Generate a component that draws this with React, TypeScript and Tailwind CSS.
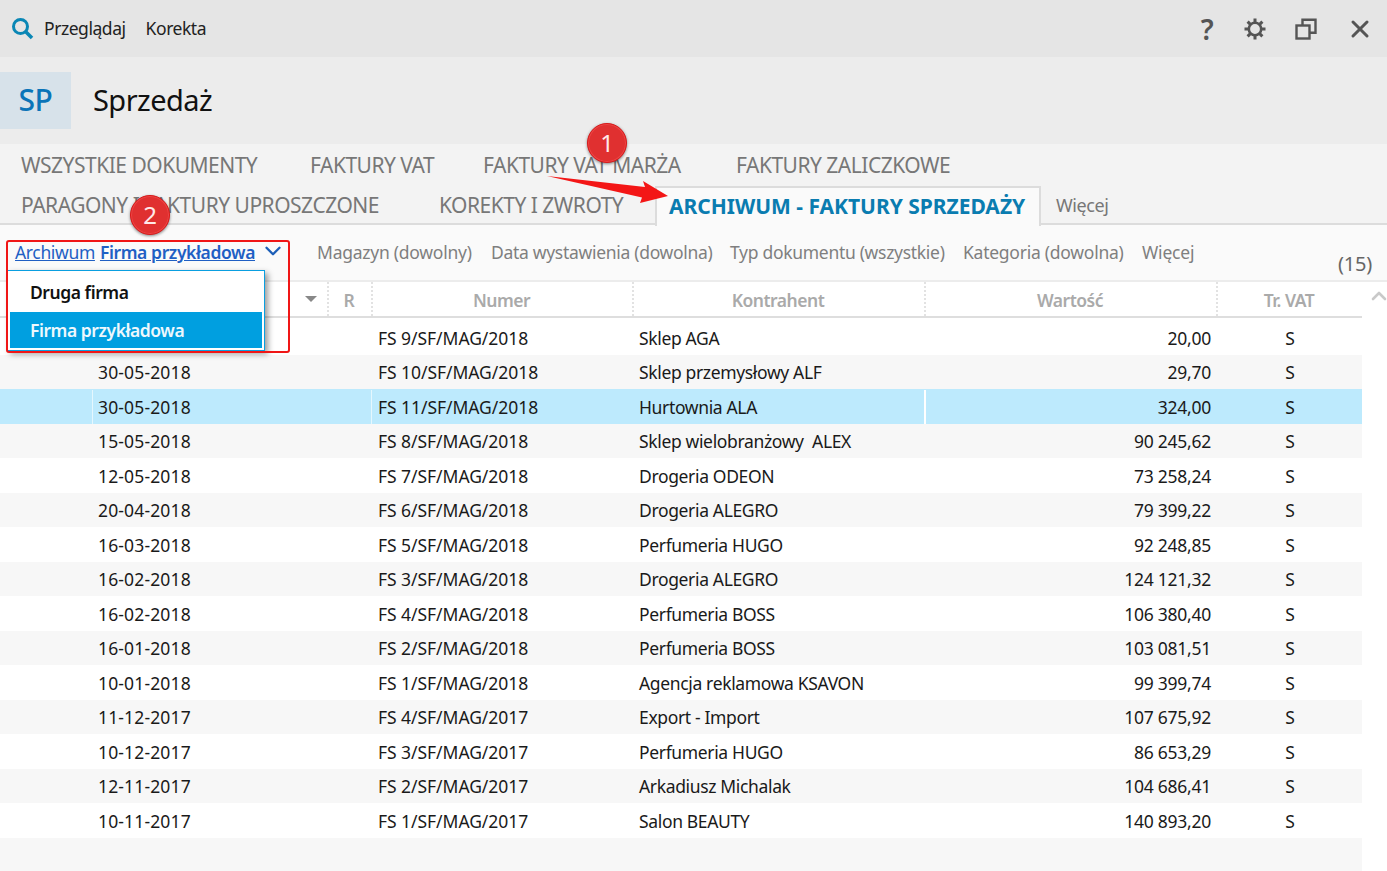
import { ChevronDown, ChevronUp, X } from 'lucide-react'

const rows = [
  ['30-05-2018', 'FS 9/SF/MAG/2018', 'Sklep AGA', '20,00'],
  ['30-05-2018', 'FS 10/SF/MAG/2018', 'Sklep przemysłowy ALF', '29,70'],
  ['30-05-2018', 'FS 11/SF/MAG/2018', 'Hurtownia ALA', '324,00'],
  ['15-05-2018', 'FS 8/SF/MAG/2018', 'Sklep wielobranżowy  ALEX', '90 245,62'],
  ['12-05-2018', 'FS 7/SF/MAG/2018', 'Drogeria ODEON', '73 258,24'],
  ['20-04-2018', 'FS 6/SF/MAG/2018', 'Drogeria ALEGRO', '79 399,22'],
  ['16-03-2018', 'FS 5/SF/MAG/2018', 'Perfumeria HUGO', '92 248,85'],
  ['16-02-2018', 'FS 3/SF/MAG/2018', 'Drogeria ALEGRO', '124 121,32'],
  ['16-02-2018', 'FS 4/SF/MAG/2018', 'Perfumeria BOSS', '106 380,40'],
  ['16-01-2018', 'FS 2/SF/MAG/2018', 'Perfumeria BOSS', '103 081,51'],
  ['10-01-2018', 'FS 1/SF/MAG/2018', 'Agencja reklamowa KSAVON', '99 399,74'],
  ['11-12-2017', 'FS 4/SF/MAG/2017', 'Export - Import', '107 675,92'],
  ['10-12-2017', 'FS 3/SF/MAG/2017', 'Perfumeria HUGO', '86 653,29'],
  ['12-11-2017', 'FS 2/SF/MAG/2017', 'Arkadiusz Michalak', '104 686,41'],
  ['10-11-2017', 'FS 1/SF/MAG/2017', 'Salon BEAUTY', '140 893,20'],
]

const gridCols = 'grid grid-cols-[92px_235px_44px_261px_292px_292px_146px] w-[1362px]'

function Row({ row, index }: { row: string[]; index: number }) {
  const selected = index === 2
  const bg = selected ? 'bg-[#bdeafd]' : index % 2 === 1 ? 'bg-[#f7f7f7]' : 'bg-white'
  const faint = selected ? 'shadow-[inset_1px_0_0_rgba(255,255,255,0.6)]' : ''
  const strong = selected ? 'shadow-[inset_2px_0_0_#ffffff]' : ''
  return (
    <div className={`${gridCols} h-[34.5px] items-stretch pt-[1px] ${bg}`}>
      <div />
      <div className={`flex items-center pl-[6px] tracking-[0.15px] ${faint}`}>{row[0]}</div>
      <div />
      <div className={`flex items-center pl-[7px] tracking-[-0.05px] ${faint}`}>{row[1]}</div>
      <div className="flex items-center pl-[7px] whitespace-pre">{row[2]}</div>
      <div className={`flex items-center justify-end pr-[5px] tracking-[-0.25px] ${strong}`}>{row[3]}</div>
      <div className="flex items-center justify-center pl-[2px]">S</div>
    </div>
  )
}

function HeaderCell({ label }: { label: string }) {
  return (
    <div className="flex items-center justify-center pt-[2px] pr-[2px] border-l-2 border-dotted border-[#e2e2e2]">
      {label}
    </div>
  )
}

function Marker({ n, className }: { n: string; className: string }) {
  return (
    <div
      className={`absolute w-[40px] h-[40px] rounded-full bg-[#e03030] border border-[#d81a1a] shadow-[0_1px_3px_rgba(0,0,0,0.45),inset_0_0_0_1px_rgba(255,90,90,0.5)] flex items-center justify-center text-[#ffe9e9] text-[24px] ${className}`}
    >
      {n}
    </div>
  )
}

export default function App() {
  return (
    <div className="relative w-[1387px] h-[871px] overflow-hidden bg-white text-[#1a1a1a] text-[17.5px] tracking-[-0.35px] font-['Noto_Sans',sans-serif]">
      {/* top bar */}
      <div className="h-[57px] bg-[#e5e5e5] flex items-center pl-[11px]">
        <svg width="23" height="23" viewBox="0 0 23 23" fill="none" stroke="#0a87b5" strokeWidth="3">
          <circle cx="9.5" cy="9.5" r="7" />
          <path d="M14.5 14.5 L21 21" strokeWidth="3.6" />
        </svg>
        <span className="ml-[10px] text-[#222] tracking-[-0.45px]">Przeglądaj</span>
        <span className="ml-[20px] text-[#222] tracking-[-0.45px]">Korekta</span>
        <div className="ml-auto flex items-center text-[#555]">
          <span className="w-[24px] text-center text-[28px] leading-none font-semibold">?</span>
          <svg className="ml-[24px]" width="24" height="24" viewBox="0 0 24 24" fill="none" stroke="#555">
            <circle cx="12" cy="12" r="6.2" strokeWidth="2.6" />
            <path
              d="M12 1.5v4M12 18.5v4M1.5 12h4M18.5 12h4M4.6 4.6l2.8 2.8M16.6 16.6l2.8 2.8M4.6 19.4l2.8-2.8M16.6 7.4l2.8-2.8"
              strokeWidth="3"
            />
          </svg>
          <svg className="ml-[28px]" width="22" height="22" viewBox="0 0 22 22" fill="none" stroke="#555" strokeWidth="2.4">
            <rect x="1.5" y="7.5" width="13" height="13" />
            <path d="M7.5 7V1.8h13v13H15" />
          </svg>
          <X className="ml-[29px] mr-[13px]" size={28} strokeWidth={2.6} color="#555" />
        </div>
      </div>

      {/* module title */}
      <div className="h-[87px] bg-[#ececec] pt-[15px]">
        <div className="flex items-center h-[57px]">
          <div className="w-[71px] h-[57px] bg-[#d7e2ea] flex items-center justify-center text-[#0a74b8] text-[30px] font-medium pb-[2px]">SP</div>
          <div className="ml-[22px] text-[29px] tracking-[-0.55px] text-[#111] pb-[2px]">Sprzedaż</div>
        </div>
      </div>

      {/* tabs */}
      <div className="h-[81px] bg-[#f3f3f3] border-b-2 border-[#dcdcdc] text-[21px] tracking-[-0.5px] text-[#777]">
        <div className="h-[41px] flex items-center pl-[21px] pt-[2px]">
          <div className="w-[289px]">WSZYSTKIE DOKUMENTY</div>
          <div className="w-[173px]">FAKTURY VAT</div>
          <div className="w-[253px]">FAKTURY VAT MARŻA</div>
          <div>FAKTURY ZALICZKOWE</div>
        </div>
        <div className="h-[40px] flex items-center pl-[21px]">
          <div className="w-[418px] pt-[2px]">PARAGONY I FAKTURY UPROSZCZONE</div>
          <div className="w-[216px] pt-[2px]">KOREKTY I ZWROTY</div>
          <div className="w-[386px] h-[40px] mb-[-2px] bg-[#fafafa] border-x-2 border-t-2 border-[#dcdcdc] flex items-center pl-[12px] text-[#0a7cb0] font-bold tracking-[-0.02px]">
            ARCHIWUM - FAKTURY SPRZEDAŻY
          </div>
          <div className="ml-[15px] text-[18px] tracking-[-0.4px]">Więcej</div>
        </div>
      </div>

      {/* filters */}
      <div className="h-[57px] bg-[#fafafa] border-b-2 border-[#ececec] flex pl-[15px] pt-[14px] text-[#7f7f7f]">
        <a className="text-[#1f5fc4] underline">Archiwum</a>
        <a className="ml-[5px] text-[#1f5fc4] underline font-semibold tracking-[-0.4px]">Firma przykładowa</a>
        <ChevronDown className="ml-[5px] mt-[-1px]" size={26} strokeWidth={2.2} color="#1d5fb8" />
        <div className="ml-[31px] w-[174px] tracking-[-0.25px]">Magazyn (dowolny)</div>
        <div className="w-[239px] tracking-[-0.3px]">Data wystawienia (dowolna)</div>
        <div className="w-[233px] tracking-[-0.3px]">Typ dokumentu (wszystkie)</div>
        <div className="w-[179px] tracking-[-0.25px]">Kategoria (dowolna)</div>
        <div className="tracking-[-0.2px]">Więcej</div>
        <div className="ml-auto mr-[15px] mt-[10px] text-[#666] text-[20px] tracking-[-0.2px]">(15)</div>
      </div>

      {/* table head */}
      <div className="flex h-[38px]">
        <div className={`${gridCols} h-[36px] border-b-2 border-[#dedede] text-[#aaa] font-semibold tracking-[-0.5px]`}>
          <div />
          <div className="flex items-center justify-end pr-[10px]">
            <span className="w-0 h-0 border-x-[6px] border-t-[6px] border-x-transparent border-t-[#888]" />
          </div>
          <HeaderCell label="R" />
          <HeaderCell label="Numer" />
          <HeaderCell label="Kontrahent" />
          <HeaderCell label="Wartość" />
          <HeaderCell label="Tr. VAT" />
        </div>
        <div className="flex-1 flex justify-center pl-[5px] pt-[2px]">
          <ChevronUp size={24} strokeWidth={2.6} color="#c9c9c9" />
        </div>
      </div>

      {/* rows */}
      {rows.map((row, i) => (
        <Row key={row[1]} row={row} index={i} />
      ))}
      <div className="w-[1362px] h-[34px] bg-[#f7f7f7]" />

      {/* company dropdown */}
      <div className="absolute left-[7px] top-[270px] w-[258px] h-[81px] bg-white border border-[#0a9fe0] shadow-[3px_3px_6px_rgba(0,0,0,0.4)] p-[2px] tracking-[-0.45px] font-semibold">
        <div className="h-[38px] flex items-center pl-[20px] text-[#111]">Druga firma</div>
        <div className="mt-[1px] h-[36px] flex items-center pl-[20px] pt-[1px] bg-[#009fe0] text-[#eef8fd]">Firma przykładowa</div>
      </div>

      {/* annotations */}
      <div className="absolute left-[6px] top-[240px] w-[284px] h-[113px] border-2 border-[#f01616] rounded-[3px]" />
      <svg className="absolute left-[540px] top-[170px]" width="135" height="40" viewBox="0 0 135 40">
        <polygon points="7,6 105,17 103,11 128,26 100,33 102,27.5" fill="#f31616" />
      </svg>
      <Marker n="1" className="left-[587px] top-[123px]" />
      <Marker n="2" className="left-[130px] top-[195px]" />
    </div>
  )
}
